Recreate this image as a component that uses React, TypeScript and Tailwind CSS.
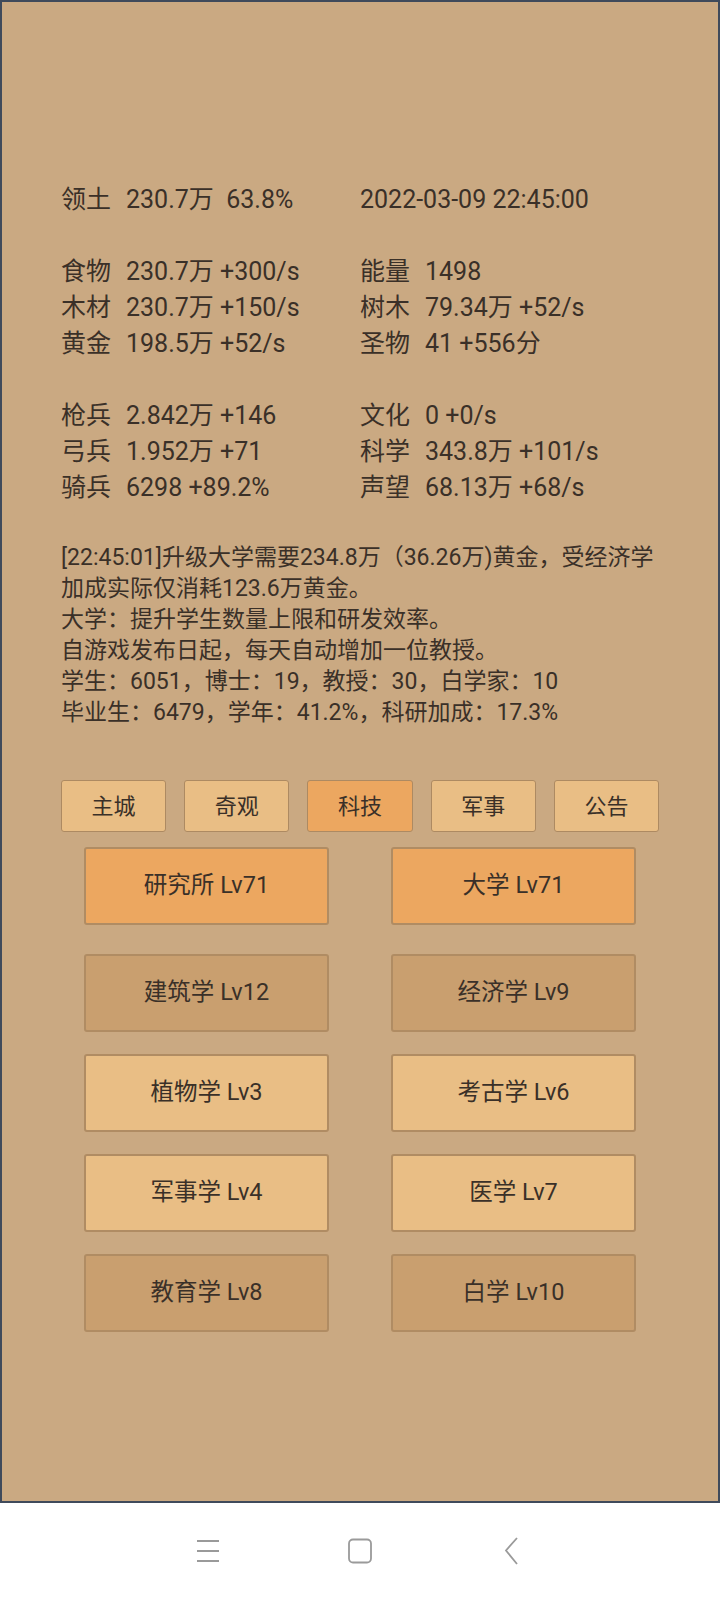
import React from 'react';

const font = { fontFamily: 'Roboto, "Noto Sans CJK SC", sans-serif' };

type Stat = { label: string; value: string };

const statRows: [Stat, Stat | null][][] = [
  [[{ label: '领土', value: '230.7万  63.8%' }, { label: '', value: '2022-03-09 22:45:00' }]],
  [
    [{ label: '食物', value: '230.7万 +300/s' }, { label: '能量', value: '1498' }],
    [{ label: '木材', value: '230.7万 +150/s' }, { label: '树木', value: '79.34万 +52/s' }],
    [{ label: '黄金', value: '198.5万 +52/s' }, { label: '圣物', value: '41 +556分' }],
  ],
  [
    [{ label: '枪兵', value: '2.842万 +146' }, { label: '文化', value: '0 +0/s' }],
    [{ label: '弓兵', value: '1.952万 +71' }, { label: '科学', value: '343.8万 +101/s' }],
    [{ label: '骑兵', value: '6298 +89.2%' }, { label: '声望', value: '68.13万 +68/s' }],
  ],
];

const logLines = [
  '[22:45:01]升级大学需要234.8万（36.26万)黄金，受经济学',
  '加成实际仅消耗123.6万黄金。',
  '大学：提升学生数量上限和研发效率。',
  '自游戏发布日起，每天自动增加一位教授。',
  '学生：6051，博士：19，教授：30，白学家：10',
  '毕业生：6479，学年：41.2%，科研加成：17.3%',
];

const tabs = ['主城', '奇观', '科技', '军事', '公告'];

type Tone = 'orange' | 'dark' | 'light';
const buildings: { name: string; tone: Tone }[][] = [
  [{ name: '研究所 Lv71', tone: 'orange' }, { name: '大学 Lv71', tone: 'orange' }],
  [{ name: '建筑学 Lv12', tone: 'dark' }, { name: '经济学 Lv9', tone: 'dark' }],
  [{ name: '植物学 Lv3', tone: 'light' }, { name: '考古学 Lv6', tone: 'light' }],
  [{ name: '军事学 Lv4', tone: 'light' }, { name: '医学 Lv7', tone: 'light' }],
  [{ name: '教育学 Lv8', tone: 'dark' }, { name: '白学 Lv10', tone: 'dark' }],
];

const toneClass: Record<Tone, string> = {
  orange: 'bg-[#eca760]',
  dark: 'bg-[#c99f6f]',
  light: 'bg-[#e9be85]',
};

function StatCell({ stat }: { stat: Stat }) {
  return (
    <div className="flex whitespace-pre">
      {stat.label && <span className="w-[65px]">{stat.label}</span>}
      <span>{stat.value}</span>
    </div>
  );
}

export default function App() {
  return (
    <div className="w-[720px] h-[1600px] flex flex-col bg-white text-[#3a3028]" style={font}>
      <div className="h-[1503px] border-2 border-[#3f4a5b] bg-[#caa982] pt-[180px] px-[59px]">
        {/* stats */}
        <div className="flex flex-col gap-[36px] text-[25px] leading-[36px]">
          {statRows.map((group, gi) => (
            <div key={gi} className="flex flex-col">
              {group.map(([l, r], ri) => (
                <div key={ri} className="grid grid-cols-[299px_1fr]">
                  <StatCell stat={l} />
                  {r && <StatCell stat={r} />}
                </div>
              ))}
            </div>
          ))}
        </div>

        {/* log */}
        <div className="mt-[36px] text-[23px] leading-[31px] whitespace-nowrap">
          {logLines.map((l, i) => (
            <div key={i}>{l}</div>
          ))}
        </div>

        {/* tabs */}
        <div className="mt-[52px] flex gap-[18px]">
          {tabs.map((t) => (
            <div
              key={t}
              className={`w-[106px] h-[52px] flex items-center justify-center rounded-[3px] border border-[#ad8a62] text-[22px] ${
                t === '科技' ? 'bg-[#eca760]' : 'bg-[#e9be85]'
              }`}
            >
              {t}
            </div>
          ))}
        </div>

        {/* buildings */}
        <div className="mt-[15px] px-[23px] flex flex-col gap-[22px]">
          {buildings.map((row, i) => (
            <div key={i} className={`flex justify-between ${i === 1 ? 'mt-[7px]' : ''}`}>
              {row.map((b) => (
                <div
                  key={b.name}
                  className={`w-[245px] h-[78px] flex items-center justify-center rounded-[3px] border-2 border-[#b08c63] text-[23.5px] ${toneClass[b.tone]}`}
                >
                  {b.name}
                </div>
              ))}
            </div>
          ))}
        </div>
      </div>

      {/* android nav bar */}
      <div className="flex-1 flex items-center justify-center gap-[112px] pb-[2px]">
        <div className="w-[40px] flex justify-center">
          <svg width="24" height="24" viewBox="0 0 24 24" fill="none" stroke="#9a9a9a" strokeWidth="1.8">
            <path d="M1 2h22M1 12h22M1 22h22" />
          </svg>
        </div>
        <div className="w-[40px] flex justify-center">
          <svg width="26" height="26" viewBox="0 0 26 26" fill="none" stroke="#9a9a9a" strokeWidth="1.8">
            <rect x="2" y="1.5" width="22" height="23" rx="4" />
          </svg>
        </div>
        <div className="w-[40px] flex justify-center">
          <svg width="16" height="28" viewBox="0 0 16 28" fill="none" stroke="#9a9a9a" strokeWidth="1.8">
            <path d="M13 1L2 13.5 13 27" />
          </svg>
        </div>
      </div>
    </div>
  );
}
